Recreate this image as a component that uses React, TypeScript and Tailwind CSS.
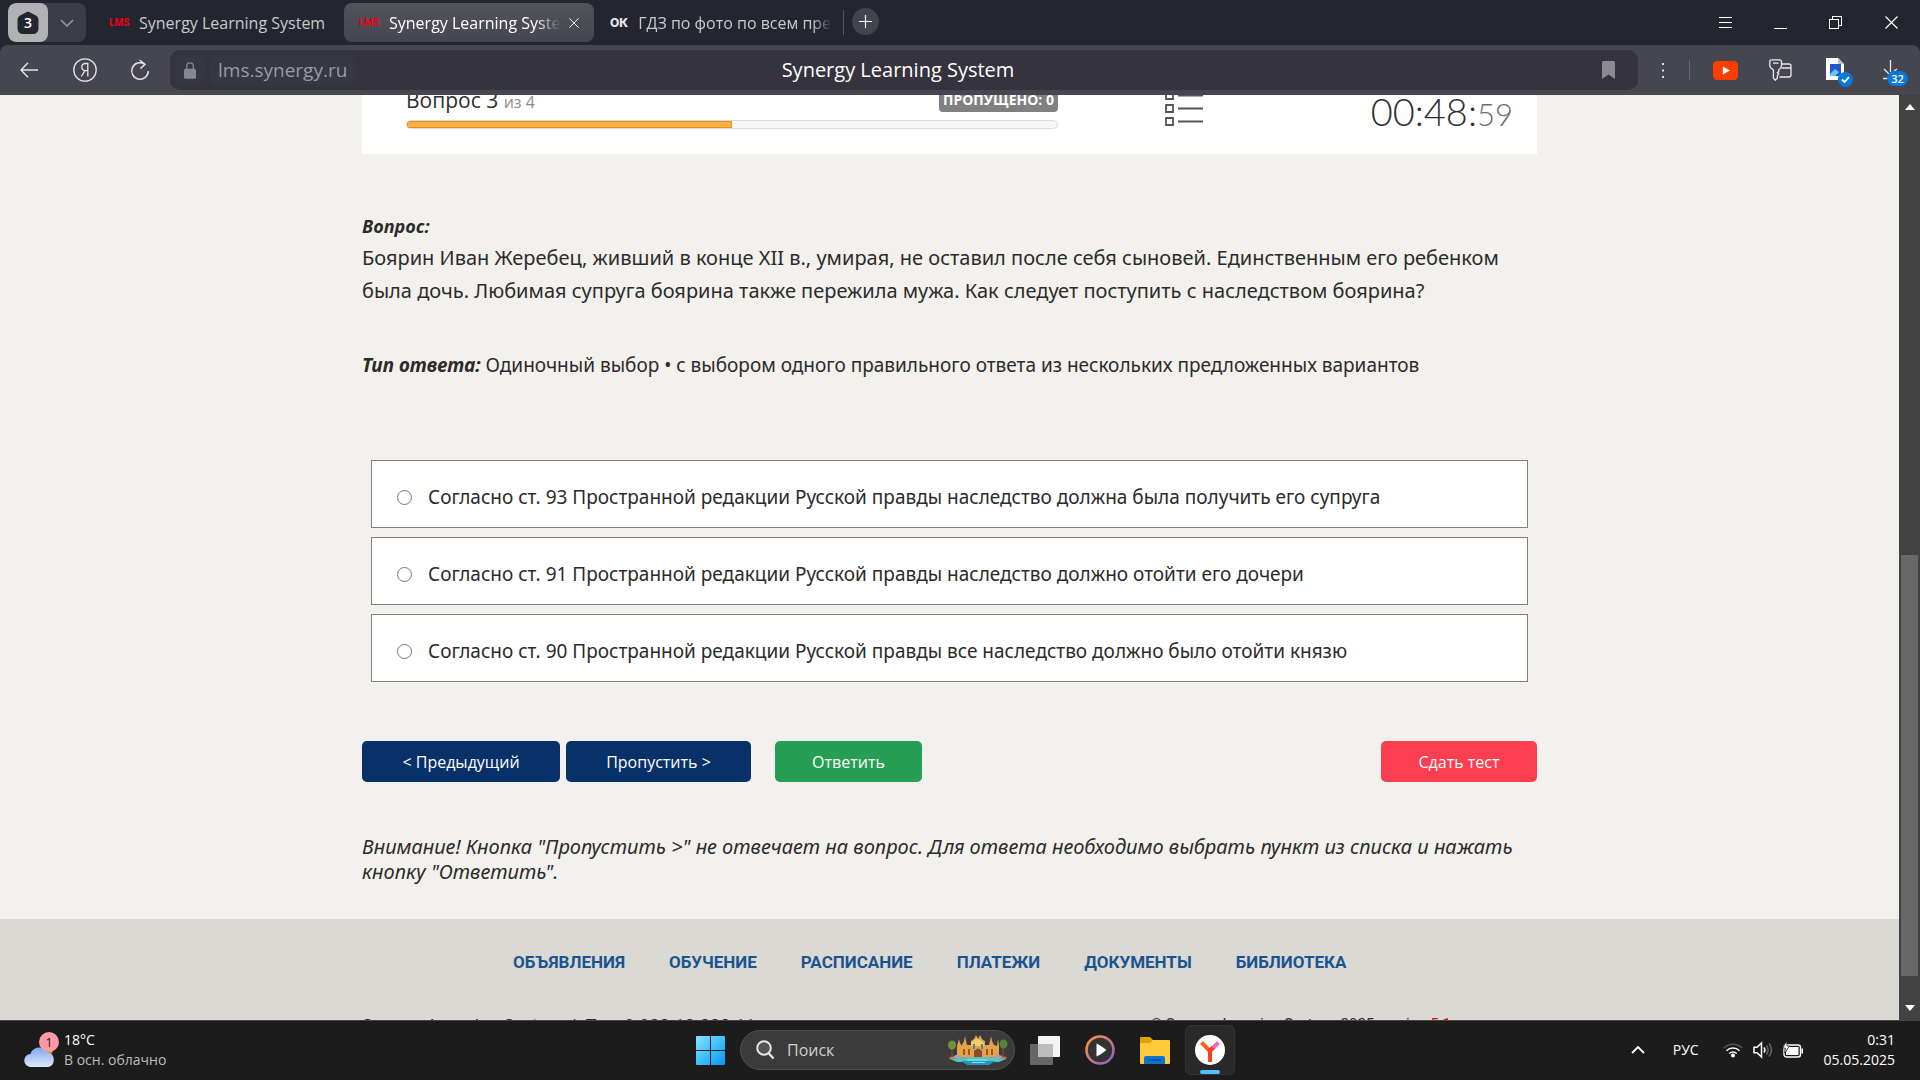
import type { ReactNode } from "react";

const answers = [
  "Согласно ст. 93 Пространной редакции Русской правды наследство должна была получить его супруга",
  "Согласно ст. 91 Пространной редакции Русской правды наследство должно отойти его дочери",
  "Согласно ст. 90 Пространной редакции Русской правды все наследство должно было отойти князю",
];

const footerLinks = ["ОБЪЯВЛЕНИЯ", "ОБУЧЕНИЕ", "РАСПИСАНИЕ", "ПЛАТЕЖИ", "ДОКУМЕНТЫ", "БИБЛИОТЕКА"];

function LmsMark() {
  return <span className="w-5 font-['Roboto',sans-serif] text-[10px] font-bold leading-none text-[#f00010]">LMS</span>;
}

function CloseIcon({ size = 13 }: { size?: number }) {
  return (
    <svg width={size} height={size} viewBox="0 0 13 13" stroke="currentColor" strokeWidth="1.2" fill="none">
      <path d="M.5.5l12 12M12.5.5l-12 12" />
    </svg>
  );
}

function TabStrip() {
  return (
    <div className="flex h-[45px] items-center bg-[#24262f] text-base text-[#c9c9cc]">
      <div className="ml-2 flex h-[39px] w-[78px] overflow-hidden rounded-lg bg-[#3c3d46]">
        <button aria-label="Группы вкладок" className="flex w-10 items-center justify-center rounded-lg bg-[#b1b1b6]">
          <svg width="22" height="24" viewBox="0 0 22 24">
            <path d="M8.500 1.700Q11 0 13.500 1.700L19 4.600Q21.500 6 21.500 9v8q0 6-6 6h-9q-6 0-6-6V9q0-3 2.500-4.400z" fill="#24262f" />
            <text x="11" y="17" textAnchor="middle" fontFamily="Open Sans" fontSize="14" fontWeight="600" fill="#fff">3</text>
          </svg>
        </button>
        <button aria-label="Список" className="flex flex-1 items-center justify-center">
          <svg width="14" height="8" viewBox="0 0 14 8" fill="none" stroke="#96969c" strokeWidth="1.600">
            <path d="M1 1l6 6 6-6" />
          </svg>
        </button>
      </div>
      <button className="ml-[15px] flex h-[39px] w-[243px] items-center gap-[10px] pl-2">
        <LmsMark />
        <span className="whitespace-nowrap">Synergy Learning System</span>
      </button>
      <div className="flex h-[39px] w-[250px] items-center rounded-lg bg-linear-to-b from-[#52525b] to-[#464650] pl-[15px] text-white">
        <LmsMark />
        <span className="ml-[10px] w-[172px] overflow-hidden whitespace-nowrap mask-r-from-85%">Synergy Learning System</span>
        <button aria-label="Закрыть вкладку" className="ml-2">
          <CloseIcon size={10} />
        </button>
      </div>
      <button className="flex h-[39px] w-[249px] items-center gap-[10px] pl-4 text-left">
        <span className="font-['Inter',sans-serif] text-xs font-extrabold text-[#e6e6e8]">ОК</span>
        <span className="w-[194px] overflow-hidden whitespace-nowrap mask-r-from-90%">ГДЗ по фото по всем предметам</span>
      </button>
      <div className="h-[25px] w-px bg-[#55565e]" />
      <button aria-label="Новая вкладка" className="mb-[3px] ml-2 flex size-[27px] items-center justify-center rounded-full bg-[#42434c]">
        <svg width="13" height="13" viewBox="0 0 13 13" stroke="#fff" strokeWidth="1.200">
          <path d="M6.500 0v13M0 6.500h13" />
        </svg>
      </button>
      <div className="ml-auto flex text-white">
        <button aria-label="Меню" className="flex w-[55px] justify-center">
          <svg width="13" height="13" viewBox="0 0 13 13" stroke="currentColor" shapeRendering="crispEdges">
            <path d="M0 1.500h13M0 6.500h13M0 11.500h13" />
          </svg>
        </button>
        <button aria-label="Свернуть" className="flex w-[55px] justify-center">
          <svg width="13" height="13" viewBox="0 0 13 13" stroke="currentColor" shapeRendering="crispEdges">
            <path d="M0 12.500h13" />
          </svg>
        </button>
        <button aria-label="Развернуть" className="flex w-[55px] justify-center">
          <svg width="13" height="13" viewBox="0 0 13 13" fill="none" stroke="currentColor" shapeRendering="crispEdges">
            <path d="M.5 3.500h9v9h-9zM3.500 3.500v-3h9v9h-3" />
          </svg>
        </button>
        <button aria-label="Закрыть" className="flex w-[57px] justify-center">
          <CloseIcon />
        </button>
      </div>
    </div>
  );
}

function Toolbar() {
  return (
    <div className="bg-[#24262f]">
      <div className="flex h-[50px] items-center rounded-t-lg bg-[#464650] text-[#e4e4e6]">
        <div className="flex w-[170px] items-center">
          <button aria-label="Назад" className="flex w-[57px] justify-center">
            <svg width="18" height="16" viewBox="0 0 18 16" fill="none" stroke="currentColor" strokeWidth="1.400">
              <path d="M8 .8L1 8l7 7.200M1 8h17" />
            </svg>
          </button>
          <button aria-label="Яндекс" className="flex w-[56px] justify-center">
            <svg width="24" height="24" viewBox="0 0 24 24" fill="none" stroke="currentColor" strokeWidth="1.300">
              <circle cx="12" cy="12" r="11.200" />
              <path d="M14.800 18.500V5.500h-2.300c-2.400 0-3.700 1.500-3.700 3.600 0 2.200 1.300 3.500 3.500 3.500h2.500M12 12.600L8.300 18.500" />
            </svg>
          </button>
          <button aria-label="Обновить" className="flex w-[54px] justify-center">
            <svg width="20" height="22" viewBox="0 0 20 22" fill="none" stroke="currentColor" strokeWidth="1.500">
              <path d="M14.500 5A8.300 8.300 0 1 0 18.300 12M9.500 1L15 5.200 10.500 9.500" />
            </svg>
          </button>
        </div>
        <div className="grid h-10 flex-1 grid-cols-[1fr_auto_1fr] items-center rounded-[10px] bg-[#35343e]">
          <div className="flex items-center gap-1 pl-[5px] text-[#9b9ba2]">
            <span className="flex h-[30px] w-[30px] items-center justify-center rounded-lg bg-[#353741]">
              <svg width="12" height="17" viewBox="0 0 12 17">
                <path d="M2.700 8V4.200a3.300 3.300 0 0 1 6.600 0V8" fill="none" stroke="#858990" strokeWidth="1.300" />
                <rect y="6.800" width="12" height="10" rx="1.600" fill="#858990" />
              </svg>
            </span>
            <span className="flex h-[30px] items-center rounded-lg bg-[#353741] px-[9px] text-[19px]">lms.synergy.ru</span>
          </div>
          <span className="pr-3 text-xl text-white">Synergy Learning System</span>
          <button aria-label="Закладка" className="mr-[23px] justify-self-end">
            <svg width="13" height="18" viewBox="0 0 13 18" fill="#8a8a91">
              <path d="M1.500 0h10Q13 0 13 1.500V18l-6.500-4.500L0 18V1.500Q0 0 1.500 0z" />
            </svg>
          </button>
        </div>
        <div className="flex w-[282px] items-center">
          <button aria-label="Ещё" className="flex w-[51px] justify-center">
            <svg width="3" height="15" viewBox="0 0 3 15" fill="#dedee0">
              <path d="M0 0h2v2H0zM0 6.500h2v2H0zM0 13h2v2H0z" />
            </svg>
          </button>
          <div className="h-5 w-px bg-[#686871]" />
          <button aria-label="YouTube" className="ml-[23px]">
            <svg width="25" height="19" viewBox="0 0 25 19">
              <rect width="25" height="19" rx="4.500" fill="#ff3d00" />
              <path d="M9.800 5.500v8l7.200-4z" fill="#fff" />
            </svg>
          </button>
          <button aria-label="Пароли" className="ml-[31px]">
            <svg width="23" height="22" viewBox="0 0 23 22" fill="none" stroke="#e9e9eb" strokeWidth="1.300">
              <path d="M12.500 5H20q2 0 2 2v9q0 2-2 2h-9.500M12.500 9H22" />
              <path d="M3 .8h7.500q2 0 2 2v3.800q0 2.500-2.700 4.200v1.800l-1.400 1.200 1.400 1.200-1.400 1.200V19l-2 2.200-2-2V10.800Q.8 9 .8 6.600V2.800Q.8.8 3 .8zM4 4.200h5.500" />
            </svg>
          </button>
          <button aria-label="Снимок" className="ml-[34px] pt-1">
            <svg width="28" height="30" viewBox="0 0 28 30">
              <path d="M0 1h12l6 6v16H0z" fill="#fff" />
              <path d="M12 1v6h6z" fill="#b9bcc4" />
              <rect x="4" y="7" width="11" height="12" fill="#2456c8" />
              <path d="M4 17l5-5 4 3-4 4H4z" fill="#5ec8fa" />
              <circle cx="19.500" cy="22.500" r="7.500" fill="#0b78dc" />
              <path d="M16 22.500l2.500 2.500 4.500-4.800" fill="none" stroke="#fff" strokeWidth="1.800" />
            </svg>
          </button>
          <button aria-label="Загрузки: 32" className="ml-[28px] pt-1">
            <svg width="26" height="28" viewBox="0 0 26 28">
              <path d="M8.500 2v12M2 11l5 5M12 13l3-2M1 20.500h5" fill="none" stroke="#e9e9eb" strokeWidth="1.300" />
              <rect x="5" y="13" width="21" height="15" rx="7.500" fill="#0b78dc" />
              <text x="15.500" y="24.500" textAnchor="middle" fontFamily="Open Sans" fontSize="11" fontWeight="600" fill="#fff">32</text>
            </svg>
          </button>
        </div>
      </div>
    </div>
  );
}

function QuizHeader() {
  return (
    <div className="flex h-[94px] items-end bg-white pb-[25px] pl-11">
      <div className="w-[652px]">
        <div className="flex items-end justify-between">
          <p className="text-[21px] leading-7 text-[#2d2d2d]">
            Вопрос 3 <span className="text-base text-[#8c8c8c]">из 4</span>
          </p>
          <span className="mb-[2px] rounded-sm bg-[#808080] px-1 text-sm font-bold leading-6 text-white">ПРОПУЩЕНО: 0</span>
        </div>
        <div className="mt-[6px] h-[9px] overflow-hidden rounded-full border border-[#dcdcdc] bg-[#f7f7f7]">
          <div className="h-full w-1/2 border border-[#ea9210] bg-[#f9b24a]" />
        </div>
      </div>
      <svg className="mb-[2px] ml-[107px]" width="38" height="44" viewBox="0 0 38 44" fill="none" stroke="#555" strokeWidth="1.800">
        <path d="M1 9h7v7H1zM1 22h7v7H1zM1 35h7v7H1z" />
        <path d="M13 12.500h25M13 25.500h25M13 38.500h25" />
      </svg>
      <p className="mr-[24px] ml-auto font-['Lato',sans-serif] text-[38px] font-light leading-[30px] text-[#2f2f2f]">
        00:48:<span className="text-[31px] text-[#6d6d6d]">59</span>
      </p>
    </div>
  );
}

function QuizButton({ className, children }: { className: string; children: ReactNode }) {
  return <button className={`h-[41px] rounded-[5px] text-base text-white ${className}`}>{children}</button>;
}

function Page() {
  return (
    <main className="min-w-0 flex-1 overflow-hidden bg-[#f3f1ed] text-[#2b2b2b]">
      <div className="mx-auto -mt-[35px] max-w-[1175px]">
        <QuizHeader />
        <section className="pt-[60px]">
          <p className="text-lg font-bold italic leading-6">Вопрос:</p>
          <p className="mt-[3px] font-['Noto_Sans',sans-serif] text-xl leading-[33px]">
            Боярин Иван Жеребец, живший в конце XII в., умирая, не оставил после себя сыновей. Единственным его ребенком
            была дочь. Любимая супруга боярина также пережила мужа. Как следует поступить с наследством боярина?
          </p>
          <p className="mt-[46px] font-['Noto_Sans',sans-serif] text-[19px] leading-[25px]">
            <b className="italic">Тип ответа:</b> Одиночный выбор • с выбором одного правильного ответа из нескольких
            предложенных вариантов
          </p>
        </section>
        <form className="mx-[9px] mt-[82px] flex flex-col gap-[9px] font-['Noto_Sans',sans-serif]">
          {answers.map((a) => (
            <label key={a} className="flex h-[68px] items-center border border-[#808080] bg-white pt-[6px] pl-[25px] text-[19px]">
              <input
                type="radio"
                name="answer"
                className="mr-4 size-[15px] appearance-none rounded-full border border-[#767676] bg-white"
              />
              {a}
            </label>
          ))}
        </form>
        <div className="mt-[59px] flex">
          <QuizButton className="w-[198px] bg-[#083069]">&lt; Предыдущий</QuizButton>
          <QuizButton className="ml-[6px] w-[185px] bg-[#083069]">Пропустить &gt;</QuizButton>
          <QuizButton className="ml-6 w-[147px] bg-[#269f54]">Ответить</QuizButton>
          <QuizButton className="ml-auto w-[156px] bg-[#fb3e50]">Сдать тест</QuizButton>
        </div>
        <p className="mt-[52px] font-['Noto_Sans',sans-serif] text-xl italic leading-[25px]">
          Внимание! Кнопка "Пропустить &gt;" не отвечает на вопрос. Для ответа необходимо выбрать пункт из списка и нажать
          кнопку "Ответить".
        </p>
      </div>
      <footer className="mt-[35px] h-[220px] bg-[#dad9d4] pt-[31px]">
        <nav className="mx-auto flex max-w-[1175px] gap-11 pl-[151px] font-['Roboto',sans-serif] text-[17px] font-bold leading-6 text-[#1a5490]">
          {footerLinks.map((l) => (
            <a key={l} href="#">{l}</a>
          ))}
        </nav>
        <div className="mx-auto mt-[38px] flex max-w-[1175px] font-['Roboto',sans-serif]">
          <p className="text-lg leading-7">Synergy Learning System &nbsp;|&nbsp; Тел: 8-800-10-000-11</p>
          <p className="mr-[86px] ml-auto text-[15px] leading-6">
            © Synergy Learning System, 2025 version <span className="text-[#e30613]">5.1</span>
          </p>
        </div>
      </footer>
    </main>
  );
}

function Scrollbar() {
  return (
    <div className="flex w-[21px] flex-col items-center bg-[#424242] py-[9px]">
      <svg width="10" height="6" viewBox="0 0 10 6" fill="#fff"><path d="M5 0l5 6H0z" /></svg>
      <div className="flex w-full flex-1 flex-col px-[2px]">
        <div className="grow-[445]" />
        <div className="grow-[421] bg-[#686868]" />
        <div className="grow-[29]" />
      </div>
      <svg width="10" height="6" viewBox="0 0 10 6" fill="#fff"><path d="M0 0h10L5 6z" /></svg>
    </div>
  );
}

function Castle() {
  return (
    <svg width="60" height="30" viewBox="0 0 60 30">
      <ellipse cx="30" cy="23" rx="29" ry="4" fill="#b9733a" />
      <path d="M2 24q28-5 56 0l-7 3H9z" fill="#57c5bd" />
      <path d="M13 26h34l-6 4H19z" fill="#2493c8" />
      <path d="M9 22V11l1-3 1-4 1 4 2 3v-1l2-4 1-5 1 5 1 4h4V6l3-2 2-4 2 4 2-4 2 4 3 2v4h4l1-4 1-5 1 5 2 4 3 1 1-7 1 7v11z" fill="#e4a24c" />
      <path d="M23 8l6-5 7 5v3H23z" fill="#f7ca73" />
      <path d="M15 14h2v6h-2zM20 14h2v6h-2zM38 14h2v6h-2zM43 14h2v6h-2z" fill="#9a5828" />
      <path d="M26 22v-6q4-5 8 0v6z" fill="#8d4d28" />
      <path d="M25 9h2v5h-2zM33 9h2v5h-2z" fill="#3f8d91" />
      <path d="M5 23q4-7 9 0M46 23q4-7 9 0" fill="#a79bce" />
      <path d="M4 13v9M55 13v9" stroke="#7d4a22" strokeWidth="1.500" />
      <ellipse cx="4" cy="10" rx="4" ry="4.500" fill="#6d9140" />
      <ellipse cx="55.500" cy="9" rx="4" ry="4.500" fill="#58833a" />
      <path d="M19 25h20M24 27.500h13" stroke="#a8eee0" strokeWidth=".8" />
    </svg>
  );
}

function TaskTile({ label, active, children }: { label: string; active?: boolean; children: ReactNode }) {
  return (
    <button
      aria-label={label}
      className={`relative flex size-[50px] items-center justify-center rounded-md ${active ? "border border-[#333] bg-[#292929]" : ""}`}
    >
      {children}
      {active && <span className="absolute bottom-0 h-1 w-5 rounded-full bg-[#4cc2ff]" />}
    </button>
  );
}

function Taskbar() {
  return (
    <div className="grid h-[60px] grid-cols-[1fr_auto_1fr] items-center border-t border-[#454545] bg-[#1c1c1c] pb-px text-white">
      <button className="flex items-center gap-2 pl-6 text-left text-sm leading-5">
        <svg width="36" height="38" viewBox="0 0 36 38">
          <defs>
            <linearGradient id="cloud" x1="0" y1="0" x2="0" y2="1">
              <stop offset="0" stopColor="#82a9ee" />
              <stop offset="1" stopColor="#dce9fc" />
            </linearGradient>
          </defs>
          <circle cx="23" cy="19" r="6" fill="#f57c12" />
          <path d="M7 36a6.500 6.500 0 0 1-.500-13 9 9 0 0 1 15-4 8 8 0 0 1 3 2.500A7.500 7.500 0 0 1 24 36z" fill="url(#cloud)" />
          <circle cx="25" cy="11" r="10" fill="#ff99a4" />
          <text x="25" y="16" textAnchor="middle" fontFamily="Open Sans" fontSize="13" fill="#222">1</text>
        </svg>
        <span className="-ml-1">
          18°C
          <span className="block text-[#bdbdbd]">В осн. облачно</span>
        </span>
      </button>
      <div className="flex items-center gap-[5px]">
        <TaskTile label="Пуск">
          <svg width="29" height="29" viewBox="0 0 29 29">
            <defs>
              <linearGradient id="win" x1="0" y1="0" x2="1" y2="1">
                <stop offset="0" stopColor="#8be3ff" />
                <stop offset=".5" stopColor="#3fc1fb" />
                <stop offset="1" stopColor="#0a91f5" />
              </linearGradient>
            </defs>
            <path d="M1 0h13v14H0V1q0-1 1-1zM15 0h13q1 0 1 1v13H15zM0 15h14v14H1q-1 0-1-1zM15 15h14v13q0 1-1 1H15z" fill="url(#win)" />
          </svg>
        </TaskTile>
        <button className="flex h-10 w-[275px] items-center rounded-full border border-[#505050] bg-[#3b3b3b] pr-[6px] pl-[15px]">
          <svg width="19" height="20" viewBox="0 0 19 20" fill="none" stroke="#e6e6e6" strokeWidth="2">
            <circle cx="8" cy="8" r="6.800" fill="#555" />
            <path d="M12.500 13l5 5.500" strokeWidth="2.400" />
          </svg>
          <span className="ml-3 flex-1 text-left text-base text-[#d0d0d0]">Поиск</span>
          <Castle />
        </button>
        <TaskTile label="Представление задач">
          <svg width="30" height="29" viewBox="0 0 30 29">
            <rect x="8" y="0" width="22" height="21" rx="1" fill="#f3f3f3" />
            <rect x="0" y="8" width="23" height="21" rx="1" fill="#666" />
            <path d="M8 8h15v13H8z" fill="#bdbdbd" />
          </svg>
        </TaskTile>
        <TaskTile label="Медиаплеер">
          <svg width="30" height="30" viewBox="0 0 30 30">
            <defs>
              <linearGradient id="media" x1="0" y1="0" x2="1" y2="1">
                <stop offset="0" stopColor="#ff9a3c" />
                <stop offset="1" stopColor="#8e5bd0" />
              </linearGradient>
            </defs>
            <circle cx="15" cy="15" r="13.500" fill="#333" stroke="url(#media)" strokeWidth="2.600" />
            <path d="M11.500 8.500v13q5.500-2.500 10-6.500-4.500-4-10-6.500z" fill="#fff" />
          </svg>
        </TaskTile>
        <TaskTile label="Проводник">
          <svg width="30" height="27" viewBox="0 0 30 27">
            <path d="M0 1q0-1 1-1h9l3 3v4H0z" fill="#e3a008" />
            <path d="M0 6h10l3-3h16q1 0 1 1v22q0 1-1 1H1q-1 0-1-1z" fill="#ffcb3d" />
            <path d="M4 27v-6q0-2 2-2h17q2 0 2 2v6z" fill="#0d74cd" />
            <path d="M8 23h13" stroke="#0b4f96" strokeWidth="1.500" />
          </svg>
        </TaskTile>
        <TaskTile label="Яндекс Браузер" active>
          <svg width="30" height="30" viewBox="0 0 30 30">
            <circle cx="15" cy="15" r="15" fill="#fff" />
            <g fill="none" strokeWidth="4">
              <path d="M6.500 7.500L15 16" stroke="#fa641e" />
              <path d="M23.500 7.500L15 16" stroke="#f763bd" />
              <path d="M15 27V15.500l3-3" stroke="#fc3f1d" />
            </g>
          </svg>
        </TaskTile>
      </div>
      <div className="flex items-center justify-end pr-[25px]">
        <svg width="14" height="8" viewBox="0 0 14 8" fill="none" stroke="#fff" strokeWidth="1.800"><path d="M1 7l6-6 6 6" /></svg>
        <span className="ml-7 text-sm">РУС</span>
        <svg className="ml-6" width="20" height="16" viewBox="0 0 20 16" fill="none" stroke="#fff" strokeWidth="1.500">
          <path d="M.8 6a13 13 0 0 1 18.400 0" stroke="#555" />
          <path d="M3.500 8.800a9.200 9.200 0 0 1 13 0M6.300 11.500a5.300 5.300 0 0 1 7.400 0" />
          <circle cx="10" cy="13.500" r="1.300" fill="#fff" />
        </svg>
        <svg className="ml-[10px]" width="20" height="18" viewBox="0 0 20 18" fill="none" stroke="#fff" strokeWidth="1.500">
          <path d="M1 6.300h3L8.500 2v14L4 11.700H1z" />
          <path d="M11 6.500q1.800 2.500 0 5" />
          <path d="M13.500 4.500q3.200 4.500 0 9M16 2.500q5 6.500 0 13" stroke="#666" />
        </svg>
        <svg className="ml-[10px]" width="21" height="18" viewBox="0 0 21 18">
          <rect x="1" y="4" width="16.500" height="12" rx="2.500" fill="none" stroke="#fff" strokeWidth="1.400" />
          <path d="M6 6h9.500v8H3v-3z" fill="#fff" />
          <path d="M18.500 7.500h1.500v5h-1.500z" fill="#fff" />
          <path d="M3.500 0L0 7h2.500L1.500 12 6.500 5H4z" fill="#fff" stroke="#1c1c1c" strokeWidth=".6" />
        </svg>
        <div className="ml-5 text-right text-sm leading-5">
          <p>0:31</p>
          <p>05.05.2025</p>
        </div>
      </div>
    </div>
  );
}

export default function App() {
  return (
    <div className="flex h-screen flex-col overflow-hidden font-['Open_Sans',sans-serif]">
      <TabStrip />
      <Toolbar />
      <div className="flex min-h-0 flex-1">
        <Page />
        <Scrollbar />
      </div>
      <Taskbar />
    </div>
  );
}
